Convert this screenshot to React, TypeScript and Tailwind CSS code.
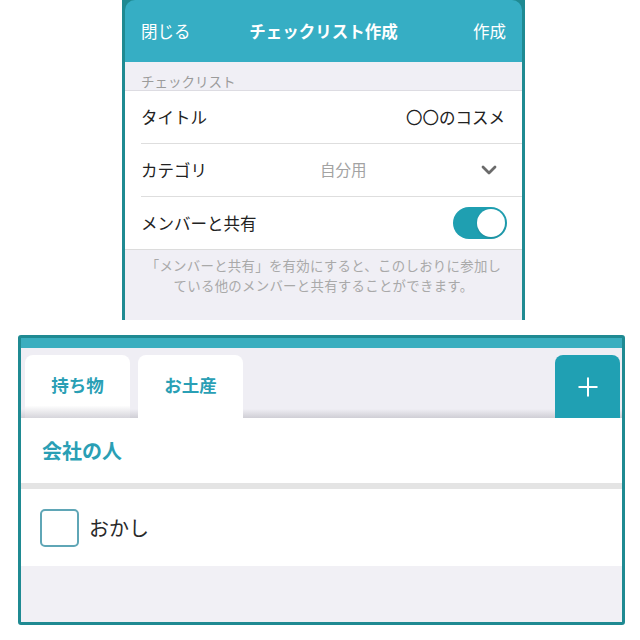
import { LuPlus } from "react-icons/lu"

interface IItem {
    label: string
    checked: boolean
}

const TABS = ["持ち物", "お土産"]
const ITEMS: IItem[] = [{ label: "おかし", checked: false }]

function ChecklistForm() {
    return (
        <div className="ml-[122px] w-[403px] h-[320px] bg-[#1f8a92] px-[3px] flex flex-col">
            <div className="h-[62px] bg-[#36aec4] rounded-t-[10px] grid grid-cols-[1fr_auto_1fr] items-center px-4 text-white text-[16.5px]">
                <span>閉じる</span>
                <span className="font-bold">チェックリスト作成</span>
                <span className="text-right">作成</span>
            </div>
            <div className="h-[29px] bg-[#f0eff5] border-b border-[#dddce2] pt-[10px] pl-4 text-[13.5px] leading-[18px] text-[#9b9b9b]">
                チェックリスト
            </div>
            <div className="bg-white">
                <div className="h-[53px] ml-4 pr-[17px] border-b border-[#dedede] flex items-center justify-between text-[16.5px] text-[#222]">
                    <span>タイトル</span>
                    <span>〇〇のコスメ</span>
                </div>
                <div className="h-[53px] ml-4 pr-[25px] border-b border-[#dedede] flex items-center text-[16.5px]">
                    <span className="w-[179px] text-[#222]">カテゴリ</span>
                    <span className="text-[#a3a3a3] text-[15.5px]">自分用</span>
                    <svg className="ml-auto" width="16" height="10" viewBox="0 0 16 10">
                        <polyline points="2,2 8,8 14,2" fill="none" stroke="#6b6b6b" strokeWidth="2.8" strokeLinecap="round" strokeLinejoin="round" />
                    </svg>
                </div>
                <div className="h-[53px] pl-4 pr-[15px] border-b border-[#dcdcdc] flex items-center justify-between text-[16.5px] text-[#222]">
                    <span>メンバーと共有</span>
                    <div className="w-[54px] h-[32px] rounded-full bg-[#1f9fb1] flex items-center justify-end pr-[2px]">
                        <div className="w-[28px] h-[28px] rounded-full bg-white shadow-sm"></div>
                    </div>
                </div>
            </div>
            <div className="flex-1 bg-[#f0eff5] pt-[5px] text-center text-[13.4px] tracking-[0.3px] leading-[20px] text-[#a9a9a9]">
                <p>「メンバーと共有」を有効にすると、このしおりに参加し</p>
                <p>ている他のメンバーと共有することができます。</p>
            </div>
        </div>
    )
}

function CheckList() {
    return (
        <div className="mt-[15px] ml-[18px] w-[607px] h-[290px] border-[3px] border-[#1f8a92] rounded-[3px] flex flex-col overflow-hidden">
            <div className="h-[10px] bg-[#3aaebf]"></div>
            <div className="relative h-[70px] bg-[#efeef4] flex items-end pl-[4px] pr-[2px]">
                <div className="absolute left-0 right-0 bottom-0 h-[9px] bg-gradient-to-b from-[#efeef4] to-[#cfced5]"></div>
                <div className="flex gap-[8px] items-end">
                    {TABS.map((tab: string, index: number) =>
                        <div key={index}
                            className={index === 1
                                ? "relative z-10 w-[105px] h-[63px] rounded-t-[8px] bg-white flex items-center justify-center pb-[2px] text-[17.5px] font-bold text-[#2a9fb5]"
                                : "relative z-10 w-[105px] h-[63px] rounded-t-[8px] bg-gradient-to-b from-white from-80% to-[#d6d5db] flex items-center justify-center pb-[2px] text-[17.5px] font-bold text-[#2a9fb5]"}>
                            {tab}
                        </div>
                    )}
                </div>
                <div className="relative z-10 ml-auto w-[65px] h-[63px] rounded-t-[8px] bg-[#20a0b3] flex items-center justify-center text-white">
                    <LuPlus size={30} strokeWidth={1.6} />
                </div>
            </div>
            <div className="h-[65px] bg-white flex items-center pl-[21px] text-[20px] font-bold text-[#2a9fb5]">
                会社の人
            </div>
            <div className="h-[6px] bg-[#e4e4e4]"></div>
            {ITEMS.map((item: IItem, index: number) =>
                <div key={index} className="h-[77px] bg-white flex items-center pl-[19px] gap-[10px]">
                    <div className="w-[39px] h-[38px] rounded-[5px] border-2 border-[#5fa6b6] bg-white"></div>
                    <span className="text-[20px] text-[#2a2a2a]">{item.label}</span>
                </div>
            )}
            <div className="flex-1 bg-[#f1f0f5]"></div>
        </div>
    )
}

function App() {
    return (
        <div className="w-[640px] h-[640px] bg-white font-['Noto_Sans_CJK_JP',sans-serif] overflow-hidden">
            <ChecklistForm />
            <CheckList />
        </div>
    )
}

export default App
